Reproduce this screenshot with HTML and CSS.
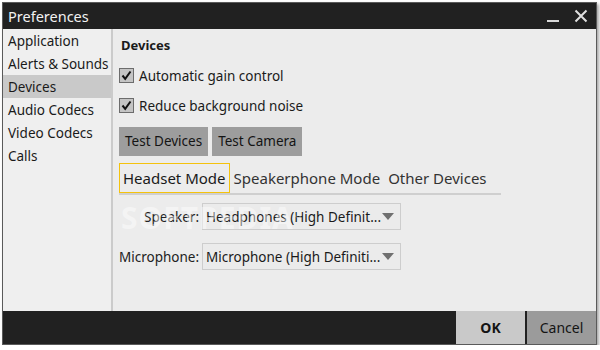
FILE: index.html
```html
<!DOCTYPE html>
<html>
<head>
<meta charset="utf-8">
<link rel="stylesheet" href="styles.css">
</head>
<body>
<div class="window">
  <div class="titlebar">
    <span class="title">Preferences</span>
    <div class="winbtns">
      <svg class="minbtn" width="14" height="14" viewBox="0 0 14 14"><rect x="1" y="11" width="12" height="2" fill="#d8d8d8"/></svg>
      <svg class="closebtn" width="14" height="14" viewBox="0 0 14 14"><path d="M1.5 1.5 L12.5 12.5 M12.5 1.5 L1.5 12.5" stroke="#e0e0e0" stroke-width="2"/></svg>
    </div>
  </div>
  <div class="main">
    <div class="sidebar">
      <div class="item">Application</div>
      <div class="item">Alerts &amp; Sounds</div>
      <div class="item selected">Devices</div>
      <div class="item">Audio Codecs</div>
      <div class="item">Video Codecs</div>
      <div class="item">Calls</div>
    </div>
    <div class="content">
      <div class="heading">Devices</div>
      <label class="check"><span class="box"><svg width="13" height="13" viewBox="0 0 13 13"><path d="M2.5 6.5 L5.2 9.8 L10.5 2.5" stroke="#111" stroke-width="2" fill="none"/></svg></span>Automatic gain control</label>
      <label class="check"><span class="box"><svg width="13" height="13" viewBox="0 0 13 13"><path d="M2.5 6.5 L5.2 9.8 L10.5 2.5" stroke="#111" stroke-width="2" fill="none"/></svg></span>Reduce background noise</label>
      <div class="buttons">
        <div class="btn">Test Devices</div>
        <div class="btn">Test Camera</div>
      </div>
      <div class="tabs">
        <div class="tab active">Headset Mode</div>
        <div class="tab">Speakerphone Mode</div>
        <div class="tab">Other Devices</div>
      </div>
      <div class="form">
        <div class="lbl">Speaker:</div>
        <div class="combo"><span>Headphones (High Definit...</span><svg width="12" height="8" viewBox="0 0 12 8"><path d="M0 0 L12 0 L6 7 Z" fill="#707070"/></svg></div>
        <div class="lbl">Microphone:</div>
        <div class="combo"><span>Microphone (High Definiti...</span><svg width="12" height="8" viewBox="0 0 12 8"><path d="M0 0 L12 0 L6 7 Z" fill="#707070"/></svg></div>
      </div>
      <div class="watermark">SOFTPEDIA<sup>®</sup></div>
    </div>
  </div>
  <div class="footer">
    <div class="fbtn ok">OK</div>
    <div class="fbtn cancel">Cancel</div>
  </div>
</div>
</body>
</html>
```

FILE: styles.css
```css
* { box-sizing: border-box; }
html, body { margin: 0; padding: 0; background: #ffffff; }
body {
  font-family: "Segoe UI", "Noto Sans", "Open Sans", sans-serif;
  color: #1a1a1a;
  padding: 2px 0 0 2px;
}
.window {
  width: 595px;
  height: 343px;
  border: 1px solid #5a5a5a;
  display: flex;
  flex-direction: column;
  box-shadow: 2px 2px 3px rgba(0,0,0,0.35);
  background: #ececec;
}
.titlebar {
  height: 26px;
  background: #212121;
  display: flex;
  align-items: center;
  justify-content: space-between;
  padding: 0 8px 0 5px;
  flex: none;
}
.title {
  color: #f2f2f2;
  font-size: 14.5px;
}
.winbtns { display: flex; gap: 14px; align-items: center; }
.main {
  height: 282px;
  display: flex;
  flex: none;
}
.sidebar {
  width: 110px;
  background: #efefef;
  border-right: 2px solid #cbcbcb;
  flex: none;
}
.item {
  height: 23px;
  line-height: 24px;
  font-size: 13.5px;
  padding-left: 5px;
  white-space: nowrap;
}
.item.selected { background: #c9c9c9; }
.content {
  flex: 1;
  position: relative;
  padding: 6px 6px 0 6px;
  display: flex;
  flex-direction: column;
  align-items: flex-start;
}
.heading {
  font-weight: bold;
  font-size: 13px;
  height: 20px;
  line-height: 20px;
  padding-left: 2px;
  margin-bottom: 13px;
}
.check {
  display: flex;
  align-items: center;
  gap: 5px;
  height: 15px;
  font-size: 13.5px;
  margin-bottom: 15px;
  white-space: nowrap;
}
.box {
  width: 15px;
  height: 15px;
  border: 1px solid #6c6c6c;
  background: #c4c4c4;
  display: flex;
  align-items: center;
  justify-content: center;
}
.buttons {
  display: flex;
  gap: 4px;
  margin-top: -1px;
}
.btn {
  background: #9d9d9d;
  height: 29px;
  line-height: 29px;
  font-size: 13.5px;
  padding: 0 6px;
  color: #141414;
}
.tabs {
  display: flex;
  margin-top: 7px;
  width: 382px;
  border-bottom: 2px solid #cfcfcf;
  height: 32px;
}
.tab {
  height: 30px;
  line-height: 28px;
  font-size: 15px;
  padding: 0 3px;
  border: 1px solid transparent;
  color: #333;
  white-space: nowrap;
}
.tab.active { border-color: #f4c20d; color: #1a1a1a; }
.form {
  display: grid;
  grid-template-columns: 80px 199px;
  column-gap: 3px;
  row-gap: 13px;
  margin-top: 8px;
  align-items: center;
}
.lbl {
  text-align: right;
  font-size: 13.5px;
  color: #222;
}
.combo {
  height: 27px;
  border: 1px solid #cdcdcd;
  background: #ebebeb;
  display: flex;
  align-items: center;
  justify-content: space-between;
  padding: 0 6px 0 3px;
  font-size: 13.5px;
  white-space: nowrap;
}
.watermark {
  position: absolute;
  left: 8px;
  top: 168px;
  font-size: 30px;
  font-weight: bold;
  letter-spacing: 1px;
  color: rgba(255,255,255,0.45);
  pointer-events: none;
}
.watermark sup { font-size: 10px; }
.footer {
  height: 33px;
  background: #212121;
  display: flex;
  justify-content: flex-end;
  gap: 2px;
  flex: none;
}
.fbtn {
  width: 69px;
  height: 33px;
  line-height: 33px;
  text-align: center;
  font-size: 14px;
  color: #141414;
}
.ok { background: #c9c9c9; font-weight: bold; }
.cancel { background: #9b9b9b; }
```
